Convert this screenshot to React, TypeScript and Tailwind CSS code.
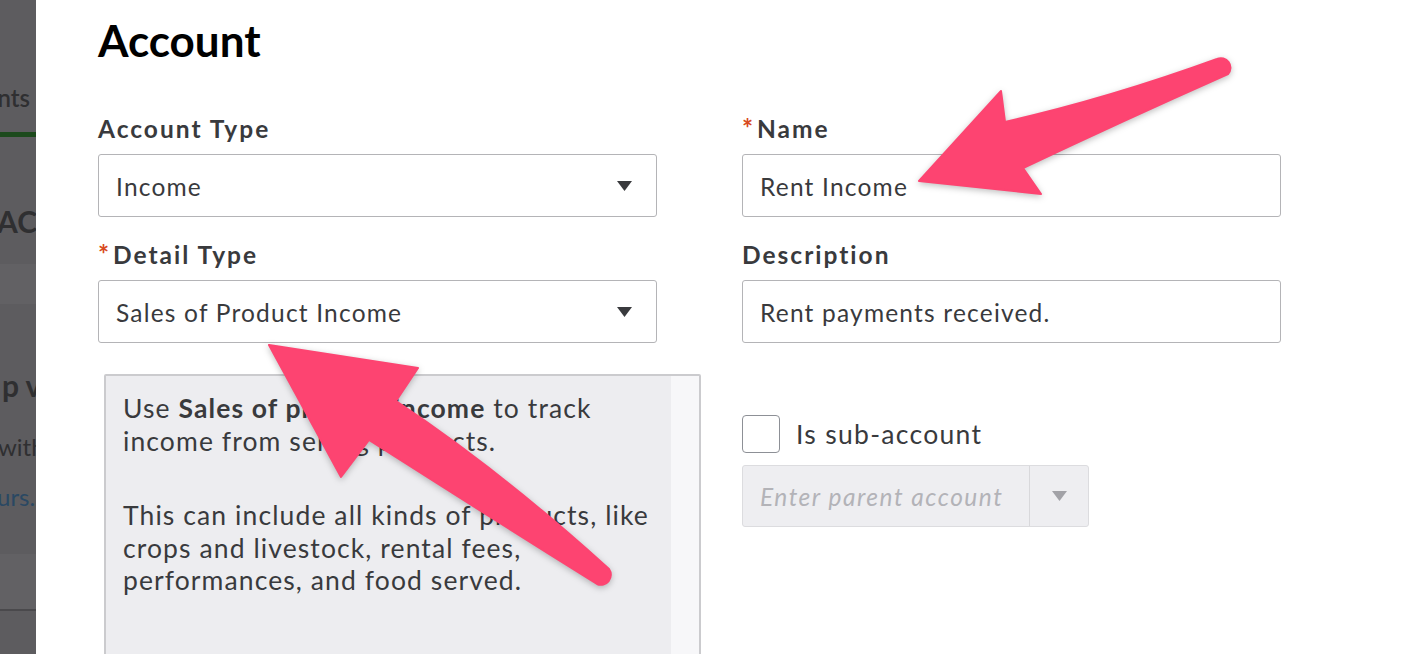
import React from 'react';

function Label({ children, required = false }: { children: React.ReactNode; required?: boolean }) {
  return (
    <div className="h-[28px] whitespace-nowrap text-[24.5px] leading-[28px] font-bold tracking-[2px] text-[#393a3d]">
      {required && <span className="mr-[4px] align-top text-[26px] leading-none tracking-normal text-[#d84a21]">*</span>}
      {children}
    </div>
  );
}

function Caret({ color = '#393a3d' }: { color?: string }) {
  return (
    <svg width="15" height="10" viewBox="0 0 15 10">
      <path d="M0 0 H15 L7.5 10 Z" fill={color} />
    </svg>
  );
}

function SelectBox({ value }: { value: string }) {
  return (
    <div className="mt-[11px] flex h-[63px] items-center justify-between rounded-[3px] border-[1.5px] border-[#b4b4b7] bg-white pl-[17px] pr-[24px]">
      <span className="pt-[3px] text-[24.5px] tracking-[1.2px] text-[#393a3d]">{value}</span>
      <Caret />
    </div>
  );
}

function TextBox({ value }: { value: string }) {
  return (
    <div className="mt-[11px] flex h-[63px] items-center rounded-[3px] border-[1.5px] border-[#b4b4b7] bg-white pl-[17px]">
      <span className="pt-[3px] text-[24.5px] tracking-[1.2px] text-[#393a3d]">{value}</span>
    </div>
  );
}

export default function App() {
  return (
    <div className="relative flex h-[654px] w-[1414px] overflow-hidden bg-white font-[Lato,'Open_Sans',sans-serif]">
      {/* dimmed page behind the dialog */}
      <aside className="flex w-[36px] shrink-0 flex-col overflow-hidden bg-[#5d5c5f] text-[#2f2f31]">
        <div className="flex h-[112px] shrink-0 items-end justify-end pr-[6px] whitespace-nowrap text-[24px] leading-[28px] font-semibold">
          Accounts
        </div>
        <div className="mt-[20px] h-[5px] shrink-0 bg-[#1c4a1c]" />
        <div className="mt-[67px] -ml-[3px] whitespace-nowrap text-[30px] leading-[34px] font-bold">ACCOUNTING</div>
        <div className="mt-[26px] h-[40px] shrink-0 bg-[#626164]" />
        <div className="mt-[64px] ml-[2px] whitespace-nowrap text-[30px] leading-[34px] font-bold">p v</div>
        <div className="mt-[30px] -ml-[2px] whitespace-nowrap text-[24px] leading-[30px]">with</div>
        <div className="mt-[20px] -ml-[3px] whitespace-nowrap text-[24px] leading-[30px] text-[#2a4863]">urs.</div>
        <div className="mt-[42px] h-[57px] shrink-0 border-b-2 border-[#4a494c] bg-[#626164]" />
      </aside>

      <main className="flex-1 pl-[62px] pt-[14px]">
        <h1 className="text-[44px] leading-[52px] font-bold text-black">Account</h1>

        <div className="mt-[49px] flex gap-[85px]">
          <div className="w-[559px] shrink-0">
            <Label>Account Type</Label>
            <SelectBox value="Income" />
            <div className="mt-[24px]">
              <Label required>Detail Type</Label>
            </div>
            <SelectBox value="Sales of Product Income" />

            <div className="mt-[31px] ml-[6px] flex h-[300px] w-[597px] rounded-[2px] border-2 border-[#cbcbce] bg-[#ededf0]">
              <div className="flex-1 pl-[17px] pt-[16px] text-[26.5px] leading-[32.5px] tracking-[1.1px] whitespace-nowrap text-[#393a3d]">
                <p>
                  Use <b>Sales of product income</b> to track
                  <br />
                  income from selling products.
                </p>
                <p className="mt-[42px]">
                  This can include all kinds of products, like
                  <br />
                  crops and livestock, rental fees,
                  <br />
                  performances, and food served.
                </p>
              </div>
              <div className="w-[28px] shrink-0 bg-[#f7f7f9]" />
            </div>
          </div>

          <div className="w-[539px] shrink-0">
            <Label required>Name</Label>
            <TextBox value="Rent Income" />
            <div className="mt-[24px]">
              <Label>Description</Label>
            </div>
            <TextBox value="Rent payments received." />

            <div className="mt-[72px] flex h-[38px] items-center gap-[16px]">
              <div className="h-[38px] w-[38px] rounded-[4px] border-[1.5px] border-[#8d9096] bg-white" />
              <span className="pt-[2px] text-[26.5px] tracking-[1.3px] text-[#393a3d]">Is sub-account</span>
            </div>

            <div className="mt-[12px] flex h-[62px] w-[347px] rounded-[3px] border-[1.5px] border-[#dcdcdf] bg-[#eeeef1]">
              <div className="flex flex-1 items-center border-r-[1.5px] border-[#d8d8db] pl-[17px]">
                <span className="pt-[3px] text-[24.5px] italic tracking-[1.5px] whitespace-nowrap text-[#b3b3b8]">Enter parent account</span>
              </div>
              <div className="flex w-[58px] items-center justify-center">
                <Caret color="#a2a2a7" />
              </div>
            </div>
          </div>
        </div>
      </main>

      {/* annotation arrows */}
      <svg
        className="pointer-events-none absolute inset-0 drop-shadow-[0_2px_3px_rgba(0,0,0,0.25)]"
        width="1414"
        height="654"
        viewBox="0 0 1414 654"
      >
        <path
          d="M919 181 L1001 91 L1005 122 Q1110 98 1217 59 A9.5 9.5 0 0 1 1228 74 Q1120 122 1023 168 L1041 194 Z"
          fill="#fd4471"
          stroke="#fd4471"
          strokeWidth="2"
          strokeLinejoin="round"
        />
        <path
          d="M269 345 L418 368 L396 401 Q500 470 609 569 A10 10 0 0 1 597 584 Q482 512 369 440 L341 477 Z"
          fill="#fd4471"
          stroke="#fd4471"
          strokeWidth="2"
          strokeLinejoin="round"
        />
      </svg>
    </div>
  );
}
